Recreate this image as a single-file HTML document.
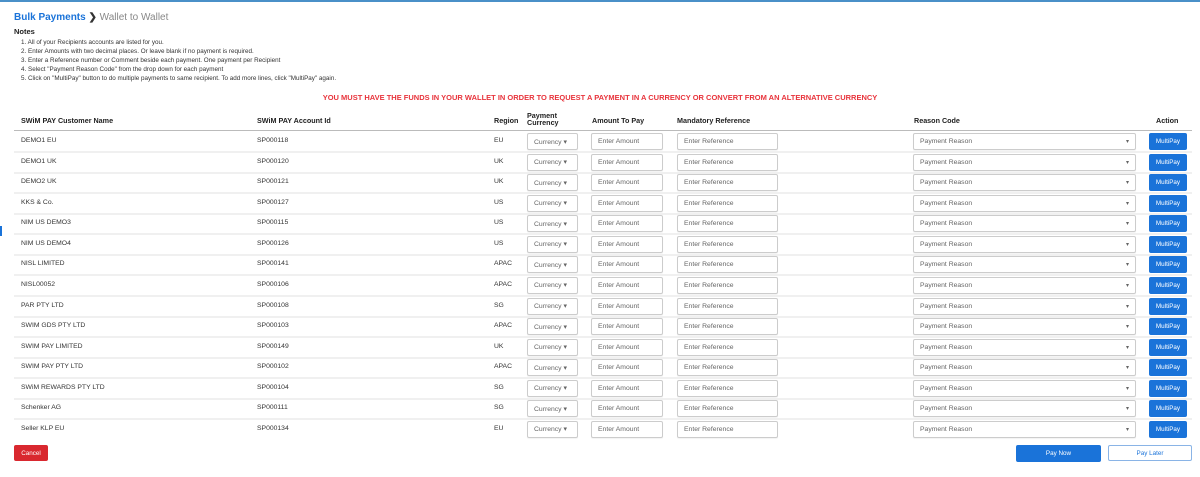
<!DOCTYPE html><html><head><style>
body{margin:0;width:1200px;height:477px;background:#fff;font-family:"Liberation Sans",sans-serif;color:#333;position:relative;overflow:hidden}
#w{position:absolute;left:0;top:4px;width:1200px;height:473px}
.a{position:absolute;white-space:nowrap}
.bc{left:14px;top:8px;font-size:10px}
.bc b{color:#1a73d9}
.bc span{color:#888}
.notes{left:14px;top:23px;font-size:7.5px;font-weight:bold;color:#222}
.nl{left:21px;font-size:6.3px;color:#333}
.warn{left:0;width:1200px;text-align:center;top:89px;font-size:7.5px;font-weight:bold;color:#e8343c}
.th{font-size:7.2px;font-weight:bold;color:#222}
.hl{left:14px;width:1178px;height:1px;background:#bbb}
.rl{left:14px;width:1178px;height:2px;background:#f0f0f0}
.c{font-size:6.8px;color:#333}
.in{border:1px solid #ccc;border-radius:2px;height:17px;box-sizing:border-box;font-size:6.8px;color:#666;padding-left:6px;background:#fff;box-shadow:0 1px 1px rgba(0,0,0,.05);display:flex;align-items:center}
.btn{background:#1a73d9;color:#fff;font-size:6.3px;height:17px;border-radius:2px;display:flex;align-items:center;justify-content:center}
</style></head><body>
<div class="a" style="left:0;top:0;width:1200px;height:2px;background:#4a90c8"></div>
<div id="w">
<div class="a bc"><b>Bulk Payments</b> <b style="color:#333">&#x276F;</b> <span>Wallet to Wallet</span></div>
<div class="a notes">Notes</div>
<div class="a nl" style="top:35px">1. All of your Recipients accounts are listed for you.</div>
<div class="a nl" style="top:44px">2. Enter Amounts with two decimal places. Or leave blank if no payment is required.</div>
<div class="a nl" style="top:53px">3. Enter a Reference number or Comment beside each payment. One payment per Recipient</div>
<div class="a nl" style="top:62px">4. Select "Payment Reason Code" from the drop down for each payment</div>
<div class="a nl" style="top:71px">5. Click on "MultiPay" button to do multiple payments to same recipient. To add more lines, click "MultiPay" again.</div>
<div class="a warn">YOU MUST HAVE THE FUNDS IN YOUR WALLET IN ORDER TO REQUEST A PAYMENT IN A CURRENCY OR CONVERT FROM AN ALTERNATIVE CURRENCY</div>
<div class="a th" style="left:21px;top:112px">SWiM PAY Customer Name</div>
<div class="a th" style="left:257px;top:112px">SWiM PAY Account Id</div>
<div class="a th" style="left:494px;top:112px">Region</div>
<div class="a th" style="left:527px;top:108px;line-height:7px">Payment<br>Currency</div>
<div class="a th" style="left:592px;top:112px">Amount To Pay</div>
<div class="a th" style="left:677px;top:112px">Mandatory Reference</div>
<div class="a th" style="left:914px;top:112px">Reason Code</div>
<div class="a th" style="left:1156px;top:112px">Action</div>
<div class="a hl" style="top:126px"></div>
<div id="rows"></div>
<div class="a btn" style="left:14px;top:441px;width:34px;height:16px;background:#d9282f">Cancel</div>
<div class="a btn" style="left:1016px;top:441px;width:85px">Pay Now</div>
<div class="a btn" style="left:1108px;top:441px;width:84px;height:16px;border:1px solid #8ab4e6;background:#fff;color:#1a73d9;box-sizing:border-box">Pay Later</div>
<div class="a" style="left:0;top:222px;width:2px;height:10px;background:#1a73d9"></div>
</div>
<script>
var d=[["DEMO1 EU","SP000118","EU"],["DEMO1 UK","SP000120","UK"],["DEMO2 UK","SP000121","UK"],["KKS & Co.","SP000127","US"],["NIM US DEMO3","SP000115","US"],["NIM US DEMO4","SP000126","US"],["NISL LIMITED","SP000141","APAC"],["NISL00052","SP000106","APAC"],["PAR PTY LTD","SP000108","SG"],["SWIM GDS PTY LTD","SP000103","APAC"],["SWIM PAY LIMITED","SP000149","UK"],["SWIM PAY PTY LTD","SP000102","APAC"],["SWiM REWARDS PTY LTD","SP000104","SG"],["Schenker AG","SP000111","SG"],["Seller KLP EU","SP000134","EU"]];
var h="";d.forEach(function(r,i){var y=137.5+i*20.57;var t=y-8.5;
h+='<div class="a c" style="left:21px;top:'+(y-4.5)+'px">'+r[0].replace('&','&amp;')+'</div><div class="a c" style="left:257px;top:'+(y-4.5)+'px">'+r[1]+'</div><div class="a c" style="left:494px;top:'+(y-4.5)+'px">'+r[2]+'</div>';
h+='<div class="a in" style="left:527px;top:'+t+'px;width:51px">Currency &#9662;</div><div class="a in" style="left:591px;top:'+t+'px;width:72px">Enter Amount</div><div class="a in" style="left:677px;top:'+t+'px;width:101px">Enter Reference</div><div class="a in" style="left:913px;top:'+t+'px;width:223px">Payment Reason<span style="position:absolute;right:6px;font-size:6px">&#9662;</span></div><div class="a btn" style="left:1149px;top:'+t+'px;width:38px">MultiPay</div>';
if(i<14)h+='<div class="a rl" style="top:'+(y+9.5)+'px"></div>';});
document.getElementById("rows").innerHTML=h;
</script>
</body></html>
